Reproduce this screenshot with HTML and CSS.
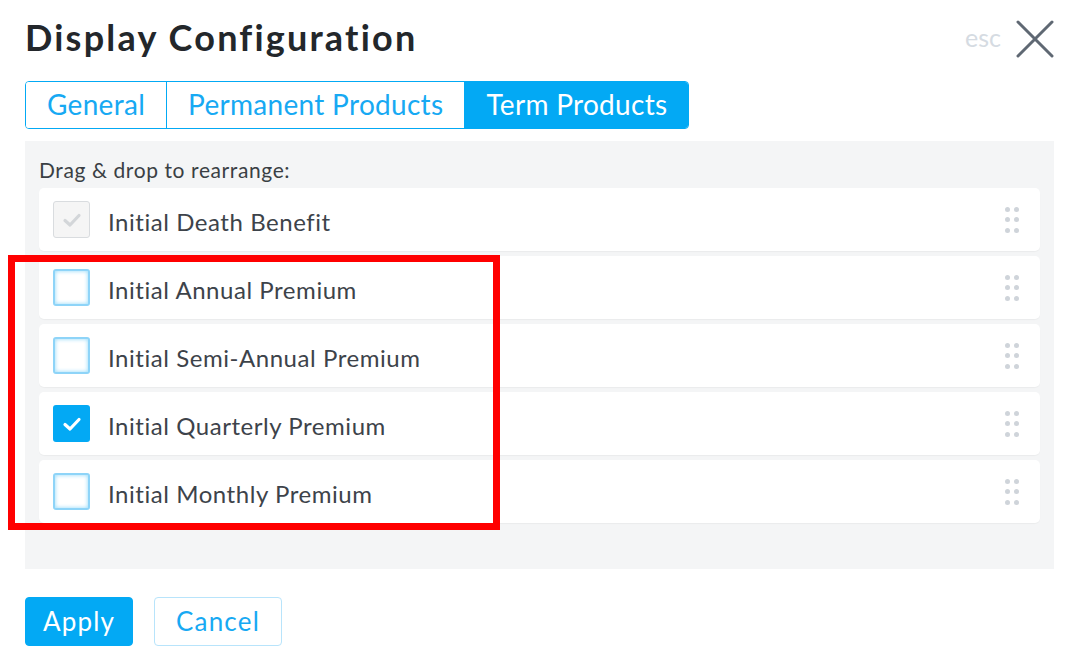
FILE: index.html
```html
<!DOCTYPE html>
<html lang="en">
<head>
<meta charset="utf-8">
<title>Display Configuration</title>
<link rel="stylesheet" href="styles.css">
</head>
<body>
<div class="dialog">
  <header class="dialog-header">
    <h1 class="dialog-title">Display Configuration</h1>
    <div class="close">
      <span class="close-hint">esc</span>
      <svg class="close-icon" width="38" height="38" viewBox="0 0 38 38" aria-hidden="true">
        <path d="M2 2 L36 36 M36 2 L2 36" stroke="#5f6873" stroke-width="3" stroke-linecap="round" fill="none"/>
      </svg>
    </div>
  </header>

  <nav class="tabs">
    <button class="tab">General</button>
    <button class="tab">Permanent Products</button>
    <button class="tab tab-active">Term Products</button>
  </nav>

  <section class="panel">
    <p class="panel-hint">Drag &amp; drop to rearrange:</p>
    <ul class="sort-list">
      <li class="sort-item">
        <span class="check check-disabled">
          <svg width="20" height="16" viewBox="0 0 20 16"><path d="M3 8.5 L8 13 L17 3.5" stroke="#d3d6d9" stroke-width="3.2" fill="none" stroke-linecap="round" stroke-linejoin="round"/></svg>
        </span>
        <span class="sort-label">Initial Death Benefit</span>
        <span class="grip"><i></i><i></i><i></i><i></i><i></i><i></i></span>
      </li>
      <li class="sort-item">
        <span class="check"></span>
        <span class="sort-label">Initial Annual Premium</span>
        <span class="grip"><i></i><i></i><i></i><i></i><i></i><i></i></span>
      </li>
      <li class="sort-item">
        <span class="check"></span>
        <span class="sort-label">Initial Semi-Annual Premium</span>
        <span class="grip"><i></i><i></i><i></i><i></i><i></i><i></i></span>
      </li>
      <li class="sort-item">
        <span class="check check-on">
          <svg width="20" height="16" viewBox="0 0 20 16"><path d="M3 8.5 L8 13 L17 3.5" stroke="#ffffff" stroke-width="3.2" fill="none" stroke-linecap="round" stroke-linejoin="round"/></svg>
        </span>
        <span class="sort-label">Initial Quarterly Premium</span>
        <span class="grip"><i></i><i></i><i></i><i></i><i></i><i></i></span>
      </li>
      <li class="sort-item">
        <span class="check"></span>
        <span class="sort-label">Initial Monthly Premium</span>
        <span class="grip"><i></i><i></i><i></i><i></i><i></i><i></i></span>
      </li>
    </ul>
  </section>

  <footer class="actions">
    <button class="btn btn-primary">Apply</button>
    <button class="btn btn-outline">Cancel</button>
  </footer>

  <div class="highlight"></div>
</div>
</body>
</html>
```

FILE: styles.css
```css
* { box-sizing: border-box; }

html, body {
  margin: 0;
  padding: 0;
  background: #ffffff;
}

body {
  font-family: Lato, "Open Sans", "Liberation Sans", sans-serif;
  color: #3d434a;
}

.dialog {
  position: relative;
  width: 1066px;
  height: 667px;
  padding: 12px 12px 0 25px;
}

.dialog-header {
  display: flex;
  justify-content: space-between;
  align-items: center;
  height: 50px;
}

.dialog-title {
  margin: 0;
  font-size: 36px;
  font-weight: 700;
  color: #23272b;
  letter-spacing: 2.2px;
}

.close {
  display: flex;
  align-items: center;
  gap: 15px;
  padding-top: 4px;
}

.close-hint {
  font-size: 25px;
  color: #d5dbe2;
  padding-bottom: 4px;
}

.close-icon { display: block; }

.tabs {
  display: inline-flex;
  margin-top: 19px;
  border: 1px solid #03a9f4;
  border-radius: 4px;
  overflow: hidden;
  height: 48px;
}

.tab {
  border: 0;
  border-left: 1px solid #03a9f4;
  background: #ffffff;
  color: #17a9f3;
  font-family: inherit;
  font-size: 28px;
  letter-spacing: 0.3px;
  padding: 0 21px 3px;
  height: 100%;
  cursor: pointer;
}

.tab:first-child { border-left: 0; }

.tab-active {
  background: #03a9f4;
  color: #ffffff;
}

.panel {
  margin-top: 12px;
  height: 428px;
  background: #f4f5f6;
  padding: 14px 14px 0;
}

.panel-hint {
  margin: 0 0 6px;
  font-size: 21px;
  letter-spacing: 0.6px;
  line-height: 24px;
  color: #3a3f44;
  padding-top: 3px;
}

.sort-list {
  list-style: none;
  margin: 0;
  padding: 0;
  display: flex;
  flex-direction: column;
  gap: 5px;
}

.sort-item {
  display: flex;
  align-items: center;
  height: 63px;
  background: #ffffff;
  border-radius: 5px;
  padding: 0 21px 0 14px;
  box-shadow: 0 1px 1px rgba(0, 0, 0, 0.04);
}

.check {
  width: 37px;
  height: 37px;
  flex: none;
  border-radius: 3px;
  border: 2px solid #8ed4f8;
  box-shadow: inset 0 0 4px rgba(3, 169, 244, 0.45);
  background: #ffffff;
  display: flex;
  align-items: center;
  justify-content: center;
}

.check-disabled {
  border: 1px solid #d9dcdf;
  box-shadow: none;
  background: #f5f5f5;
}

.check-on {
  border: 0;
  box-shadow: none;
  background: #03a9f4;
}

.sort-label {
  margin-left: 18px;
  font-size: 24px;
  letter-spacing: 0.55px;
  color: #3d434a;
  flex: 1;
  padding-top: 3px;
}

.grip {
  display: grid;
  grid-template-columns: repeat(2, 5px);
  gap: 5.5px 4px;
}

.grip i {
  display: block;
  width: 5px;
  height: 5px;
  border-radius: 50%;
  background: #cfd4da;
}

.actions {
  display: flex;
  gap: 21px;
  margin-top: 28px;
}

.btn {
  height: 49px;
  border-radius: 4px;
  font-family: inherit;
  font-size: 26px;
  letter-spacing: 1.2px;
  padding: 0 0 2px;
  cursor: pointer;
}

.btn-primary {
  background: #03a9f4;
  border: 1px solid #03a9f4;
  color: #ffffff;
  width: 108px;
}

.btn-outline {
  background: #ffffff;
  border: 1px solid #b8e4fb;
  color: #17a9f3;
  width: 128px;
}

/* red annotation frame drawn over the list */
.highlight {
  position: absolute;
  left: 8px;
  top: 255px;
  width: 492px;
  height: 275px;
  border: 7px solid #ff0000;
  pointer-events: none;
}
```
